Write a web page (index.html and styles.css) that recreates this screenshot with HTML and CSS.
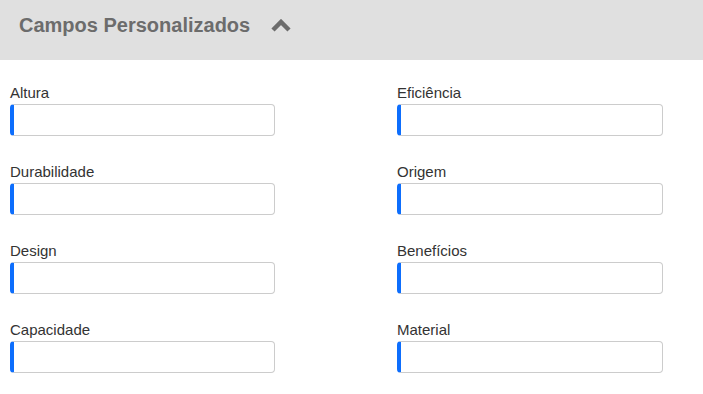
FILE: index.html
```html
<!DOCTYPE html>
<html lang="pt">
  <head>
    <meta charset="UTF-8" />
    <meta name="viewport" content="width=device-width, initial-scale=1.0" />
    <title>Campos Personalizados</title>
    <link rel="stylesheet" href="styles.css">
  </head>
  <body>
    <div class="section-header">
      <h2>Campos Personalizados</h2>
      <svg class="chevron" width="20" height="14" viewBox="0 0 20 14">
        <path d="M2 11 L10 3 L18 11" fill="none" stroke="#6c6c6c" stroke-width="4.5" />
      </svg>
    </div>
    <div class="fields">
      <div class="field">
        <label>Altura</label>
        <input type="text" class="field-input" />
      </div>
      <div class="field">
        <label>Eficiência</label>
        <input type="text" class="field-input" />
      </div>
      <div class="field">
        <label>Durabilidade</label>
        <input type="text" class="field-input" />
      </div>
      <div class="field">
        <label>Origem</label>
        <input type="text" class="field-input" />
      </div>
      <div class="field">
        <label>Design</label>
        <input type="text" class="field-input" />
      </div>
      <div class="field">
        <label>Benefícios</label>
        <input type="text" class="field-input" />
      </div>
      <div class="field">
        <label>Capacidade</label>
        <input type="text" class="field-input" />
      </div>
      <div class="field">
        <label>Material</label>
        <input type="text" class="field-input" />
      </div>
    </div>
  </body>
</html>
```

FILE: styles.css
```css
body {
  margin: 0;
  background: #fff;
  font-family: "Liberation Sans", Arial, sans-serif;
  color: #333;
}

.section-header {
  height: 60px;
  background: #e0e0e0;
  display: flex;
  align-items: center;
  padding: 0 0 9px 19px;
  box-sizing: border-box;
  gap: 21px;
}

.section-header h2 {
  margin: 0;
  font-size: 20px;
  font-weight: bold;
  color: #6c6c6c;
}

.chevron {
  display: block;
}

.fields {
  display: grid;
  grid-template-columns: 387px 266px;
  row-gap: 26px;
  padding: 23px 10px;
}

.field label {
  display: block;
  font-size: 15px;
  line-height: 20px;
  margin-bottom: 1px;
}

.field-input {
  display: block;
  width: 100%;
  height: 32px;
  box-sizing: border-box;
  border: 1px solid #ccc;
  border-left: 4px solid #0d6efd;
  border-radius: 4px;
  background: #fff;
  padding: 4px 8px;
  font-size: 14px;
}

.field:nth-child(odd) .field-input {
  width: 265px;
}
```
